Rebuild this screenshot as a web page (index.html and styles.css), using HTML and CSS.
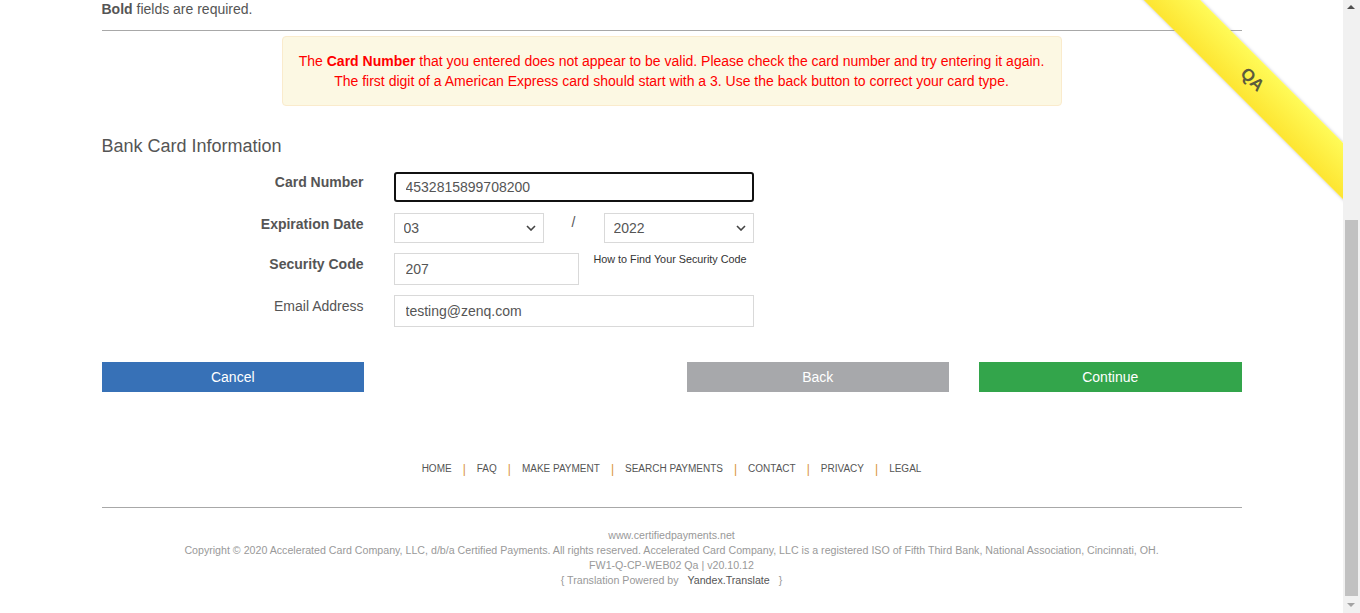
FILE: index.html
```html
<!DOCTYPE html>
<html lang="en">
<head>
<meta charset="utf-8">
<title>Certified Payments</title>
<link rel="stylesheet" href="styles.css">
</head>
<body>
<div class="page">
  <div class="container">
    <p class="req"><b>Bold</b> fields are required.</p>
    <hr class="rule rule-top">
    <div class="alert">The <b>Card Number</b> that you entered does not appear to be valid. Please check the card number and try entering it again.<br>The first digit of a American Express card should start with a 3. Use the back button to correct your card type.</div>
    <h3 class="section">Bank Card Information</h3>
    <div class="form">
      <div class="row row-card">
        <label class="lbl strong">Card Number</label>
        <div class="field"><input class="inp inp-focus w360" type="text" value="4532815899708200"></div>
      </div>
      <div class="row row-exp">
        <label class="lbl strong">Expiration Date</label>
        <div class="field exp">
          <select class="sel"><option>03</option></select>
          <span class="slash">/</span>
          <select class="sel"><option>2022</option></select>
        </div>
      </div>
      <div class="row row-sec">
        <label class="lbl strong">Security Code</label>
        <div class="field sec">
          <input class="inp w185" type="text" value="207">
          <a class="help">How to Find Your Security Code</a>
        </div>
      </div>
      <div class="row row-mail">
        <label class="lbl">Email Address</label>
        <div class="field"><input class="inp w360" type="text" value="testing@zenq.com"></div>
      </div>
    </div>
    <div class="buttons">
      <button class="btn btn-cancel">Cancel</button>
      <span></span>
      <button class="btn btn-back">Back</button>
      <button class="btn btn-continue">Continue</button>
    </div>
    <nav class="footnav">
      <a>HOME</a><span class="sep">|</span>
      <a>FAQ</a><span class="sep">|</span>
      <a>MAKE PAYMENT</a><span class="sep">|</span>
      <a>SEARCH PAYMENTS</a><span class="sep">|</span>
      <a>CONTACT</a><span class="sep">|</span>
      <a>PRIVACY</a><span class="sep">|</span>
      <a>LEGAL</a>
    </nav>
    <hr class="rule rule-bottom">
    <div class="copy">
      <div>www.certifiedpayments.net</div>
      <div>Copyright © 2020 Accelerated Card Company, LLC, d/b/a Certified Payments. All rights reserved. Accelerated Card Company, LLC is a registered ISO of Fifth Third Bank, National Association, Cincinnati, OH.</div>
      <div>FW1-Q-CP-WEB02 Qa | v20.10.12</div>
      <div>{ Translation Powered by <a class="yandex">Yandex.Translate</a> }</div>
    </div>
  </div>
  <div class="ribbon">QA</div>
</div>
<div class="scrollbar">
  <div class="arrow arrow-up"></div>
  <div class="track"><div class="thumb"></div></div>
  <div class="arrow arrow-down"></div>
</div>
</body>
</html>
```

FILE: styles.css
```css
html, body {
  margin: 0;
  padding: 0;
}
body {
  display: flex;
  height: 613px;
  overflow: hidden;
  font-family: "Liberation Sans", Arial, sans-serif;
  font-size: 14px;
  color: #555;
  background: #fff;
}
.page {
  flex: 1;
  position: relative;
  overflow: hidden;
}
.container {
  width: 1140px;
  margin: 0 auto;
}
.req {
  margin: 0;
  line-height: 18px;
}
.req b {
  color: #555;
}
.rule {
  border: 0;
  border-top: 1px solid #a8a8a8;
  height: 0;
  margin: 0;
}
.rule-top {
  margin-top: 12px;
}
.alert {
  width: 778px;
  margin: 5px auto 0;
  border: 1px solid #faebcc;
  border-radius: 4px;
  background: #fcf8e3;
  padding: 14px 0;
  text-align: center;
  color: #f00;
  line-height: 20px;
}
.section {
  margin: 30px 0 0;
  font-size: 18px;
  font-weight: normal;
  line-height: 20px;
  color: #555;
}
.form {
  margin-top: 16px;
}
.row {
  display: grid;
  grid-template-columns: 262px 360px;
  column-gap: 30px;
  margin-bottom: 10px;
}
.row-card {
  margin-bottom: 11px;
}
.row-mail {
  margin-bottom: 0;
}
.lbl {
  text-align: right;
  line-height: 20px;
  padding-top: 1px;
  color: #555;
}
.row-card .lbl {
  padding-top: 0;
}
.lbl.strong {
  font-weight: bold;
}
.inp {
  box-sizing: border-box;
  height: 32px;
  border: 1px solid #d9d9d9;
  padding: 0 11px;
  font-family: "Liberation Sans", Arial, sans-serif;
  font-size: 14px;
  color: #555;
  background: #fff;
  outline: none;
  margin: 0;
  display: block;
}
.inp-focus {
  height: 30px;
  border: 2px solid #111;
  border-radius: 3px;
  padding: 0 10px;
}
.w360 {
  width: 360px;
}
.w185 {
  width: 185px;
}
.exp {
  display: flex;
  align-items: flex-start;
}
.sel {
  box-sizing: border-box;
  width: 150px;
  height: 30px;
  margin: 0;
  border: 1px solid #d9d9d9;
  padding: 0 9px;
  font-family: "Liberation Sans", Arial, sans-serif;
  font-size: 14px;
  color: #555;
  -webkit-appearance: none;
  appearance: none;
  background: #fff url("data:image/svg+xml,%3Csvg xmlns='http://www.w3.org/2000/svg' width='10' height='6' viewBox='0 0 10 6'%3E%3Cpath d='M1 1l4 4 4-4' fill='none' stroke='%23444' stroke-width='1.6'/%3E%3C/svg%3E") no-repeat right 7px center;
  outline: none;
}
.slash {
  width: 60px;
  text-align: center;
  line-height: 18px;
  color: #555;
}
.sec {
  display: flex;
  align-items: flex-start;
}
.help {
  margin-left: 15px;
  font-size: 10.8px;
  line-height: 13px;
  color: #333;
}
.buttons {
  display: grid;
  grid-template-columns: repeat(4, 1fr);
  column-gap: 30px;
  margin-top: 35px;
}
.btn {
  height: 30px;
  border: 0;
  margin: 0;
  padding: 0;
  font-family: "Liberation Sans", Arial, sans-serif;
  font-size: 14px;
  color: #fff;
}
.btn-cancel {
  background: #3771b7;
}
.btn-back {
  background: #a7a8ab;
}
.btn-continue {
  background: #33a54b;
}
.footnav {
  display: flex;
  justify-content: center;
  margin-top: 70px;
  font-size: 10px;
  line-height: 14px;
  color: #555;
}
.footnav .sep {
  margin: 0 11px;
  font-size: 12px;
  color: #d9963a;
}
.rule-bottom {
  margin-top: 31px;
}
.copy {
  margin-top: 20px;
  text-align: center;
  font-size: 10.65px;
  line-height: 15px;
  color: #999;
}
.yandex {
  color: #555;
  margin: 0 6px;
}
.ribbon {
  position: absolute;
  left: 1087px;
  top: 60px;
  width: 330px;
  height: 40px;
  transform: rotate(45deg);
  background: linear-gradient(to bottom, #fffb58, #fde532);
  box-shadow: 0 0 3px rgba(120, 120, 150, 0.5);
  text-align: center;
  line-height: 40px;
  font-size: 17px;
  font-weight: bold;
  color: #5b5a3e;
}
.scrollbar {
  width: 17px;
  flex: none;
  background: #f1f1f1;
  display: flex;
  flex-direction: column;
}
.arrow {
  height: 17px;
  position: relative;
}
.arrow-up::after,
.arrow-down::after {
  content: "";
  position: absolute;
  left: 4px;
  border-left: 4px solid transparent;
  border-right: 4px solid transparent;
}
.arrow-up::after {
  top: 5px;
  border-bottom: 4px solid #505050;
}
.arrow-down::after {
  top: 7px;
  border-top: 4px solid #a3a3a3;
}
.track {
  flex: 1;
  padding: 203px 2px 0;
}
.thumb {
  height: 376px;
  background: #c1c1c1;
}
```
